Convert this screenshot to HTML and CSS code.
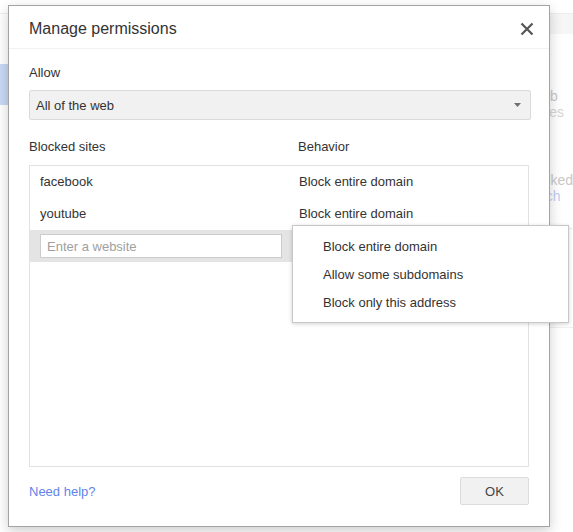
FILE: index.html
```html
<!DOCTYPE html>
<html>
<head>
<meta charset="utf-8">
<link rel="stylesheet" href="styles.css">
</head>
<body>
<div class="page">
  <div class="nav">
    <div class="nav-item"></div>
  </div>
  <div class="main">
    <div class="band"></div>
    <div class="bg-block first">
      <div class="bg-text t-web">Web</div>
      <div class="bg-text t-sites">sites</div>
    </div>
    <div class="bg-block second">
      <div class="bg-text t-blocked">Blocked</div>
      <div class="bg-text t-search link">Search</div>
    </div>
    <div class="bg-sep"></div>
    <div class="bg-block third">
      <div class="bg-text t-n">Sign in</div>
    </div>
    <div class="bg-sep"></div>
  </div>
</div>

<div class="dialog">
  <div class="dlg-header">
    <span class="dlg-title">Manage permissions</span>
    <button class="close" aria-label="Close">
      <svg width="14" height="14" viewBox="0 0 14 14"><path d="M1.5 1.5 L12.5 12.5 M12.5 1.5 L1.5 12.5" stroke="#555" stroke-width="2.2" fill="none"/></svg>
    </button>
  </div>
  <div class="dlg-body">
    <div class="label">Allow</div>
    <div class="select">
      <span>All of the web</span>
      <svg class="caret" width="7" height="4" viewBox="0 0 7 4"><path d="M0 0 H7 L3.5 4 Z" fill="#6f6f6f"/></svg>
    </div>
    <div class="cols-head">
      <span class="col-name">Blocked sites</span>
      <span class="col-beh">Behavior</span>
    </div>
    <div class="list">
      <div class="row">
        <span class="cell-name">facebook</span>
        <span class="cell-beh">Block entire domain</span>
      </div>
      <div class="row">
        <span class="cell-name">youtube</span>
        <span class="cell-beh">Block entire domain</span>
      </div>
      <div class="row edit">
        <input class="site-input" type="text" placeholder="Enter a website">
      </div>
    </div>
    <div class="footer">
      <a class="help" href="#">Need help?</a>
      <button class="ok">OK</button>
    </div>
  </div>
  <div class="menu">
    <div class="menu-item">Block entire domain</div>
    <div class="menu-item">Allow some subdomains</div>
    <div class="menu-item">Block only this address</div>
  </div>
</div>
</body>
</html>
```
FILE: styles.css
```css
* { box-sizing: border-box; }
html, body { margin: 0; padding: 0; }
body {
  width: 573px;
  height: 532px;
  overflow: hidden;
  background: #fff;
  font-family: "Liberation Sans", Arial, sans-serif;
  font-size: 13px;
  color: #333;
  position: relative;
}

/* background page */
.page {
  display: flex;
  margin-top: 13px;
  border-top: 1px solid #eeeeee;
  height: 519px;
}
.nav { width: 200px; padding-top: 50px; }
.nav-item { height: 41px; background: #c7d8f6; }
.main { flex: 1; display: flex; flex-direction: column; }
.band { height: 20px; background: #f6f6f6; }
.bg-block { position: relative; }
.bg-block.first { margin-top: 54px; }
.bg-block.second { margin-top: 52px; }
.bg-text { line-height: 16px; font-size: 14px; color: #c8c8c8; white-space: nowrap; }
.t-web { padding-left: 337px; }
.t-sites { padding-left: 343px; color: #d6d6d6; }
.t-blocked { padding-left: 331px; }
.t-search { padding-left: 324px; }
.link { color: #c0cef3; }
.bg-sep { height: 1px; background: #f0f0f0; margin-top: 24px; }
.bg-block.third { margin-top: 58px; }
.t-n { padding-left: 322px; color: #dcdcdc; }

/* dialog */
.dialog {
  position: absolute;
  left: 8px;
  top: 5px;
  width: 542px;
  height: 522px;
  background: #fff;
  border: 1px solid #a3a3a3;
  box-shadow: 0 4px 12px rgba(0, 0, 0, 0.2);
}
.dlg-header {
  height: 43px;
  border-bottom: 1px solid #f2f2f2;
  display: flex;
  align-items: center;
  justify-content: space-between;
  padding: 3px 8px 0 20px;
}
.dlg-title { font-size: 16px; color: #333; }
.close {
  width: 28px;
  height: 28px;
  border: 0;
  background: transparent;
  padding: 0;
  display: flex;
  align-items: center;
  justify-content: center;
}
.dlg-body { padding: 16px 20px 0 20px; }
.label { line-height: 16px; color: #333; }
.select {
  margin-top: 9px;
  margin-right: -2px;
  height: 30px;
  background: #f1f1f1;
  border: 1px solid #dadada;
  border-radius: 2px;
  display: flex;
  align-items: center;
  justify-content: space-between;
  padding: 0 6px 0 6px;
  color: #333;
}
.caret { margin-right: 3px; }
.cols-head {
  margin-top: 19px;
  line-height: 16px;
  display: flex;
}
.col-name { width: 269px; }
.list {
  margin-top: 10px;
  height: 302px;
  border: 1px solid #e1e1e1;
}
.row {
  height: 32px;
  display: flex;
  align-items: center;
  padding-left: 10px;
  padding-bottom: 1px;
}
.cell-name { width: 259px; color: #333; }
.cell-beh { color: #333; }
.row.edit { background: #e4e4e4; padding-bottom: 0; }
.site-input {
  width: 242px;
  height: 24px;
  border: 1px solid #cccccc;
  background: #fff;
  padding: 0 6px;
  font-family: "Liberation Sans", Arial, sans-serif;
  font-size: 13px;
  color: #333;
  outline: none;
  margin: 0;
}
.site-input::placeholder { color: #a0a0a0; }
.footer {
  margin-top: 10px;
  display: flex;
  align-items: center;
  justify-content: space-between;
}
.help { color: #6185ea; text-decoration: none; }
.ok {
  width: 69px;
  height: 28px;
  background: #f1f1f1;
  border: 1px solid #dcdcdc;
  border-radius: 2px;
  font-family: "Liberation Sans", Arial, sans-serif;
  font-size: 13px;
  color: #444;
  padding: 0;
}

/* dropdown menu overlay */
.menu {
  position: absolute;
  left: 283px;
  top: 219px;
  width: 277px;
  height: 98px;
  background: #fff;
  border: 1px solid #c8c8c8;
  box-shadow: 0 1px 4px rgba(0, 0, 0, 0.18);
  padding: 7px 0 5px;
}
.menu-item {
  height: 28px;
  line-height: 28px;
  padding-left: 30px;
  color: #333;
  white-space: nowrap;
}
```
